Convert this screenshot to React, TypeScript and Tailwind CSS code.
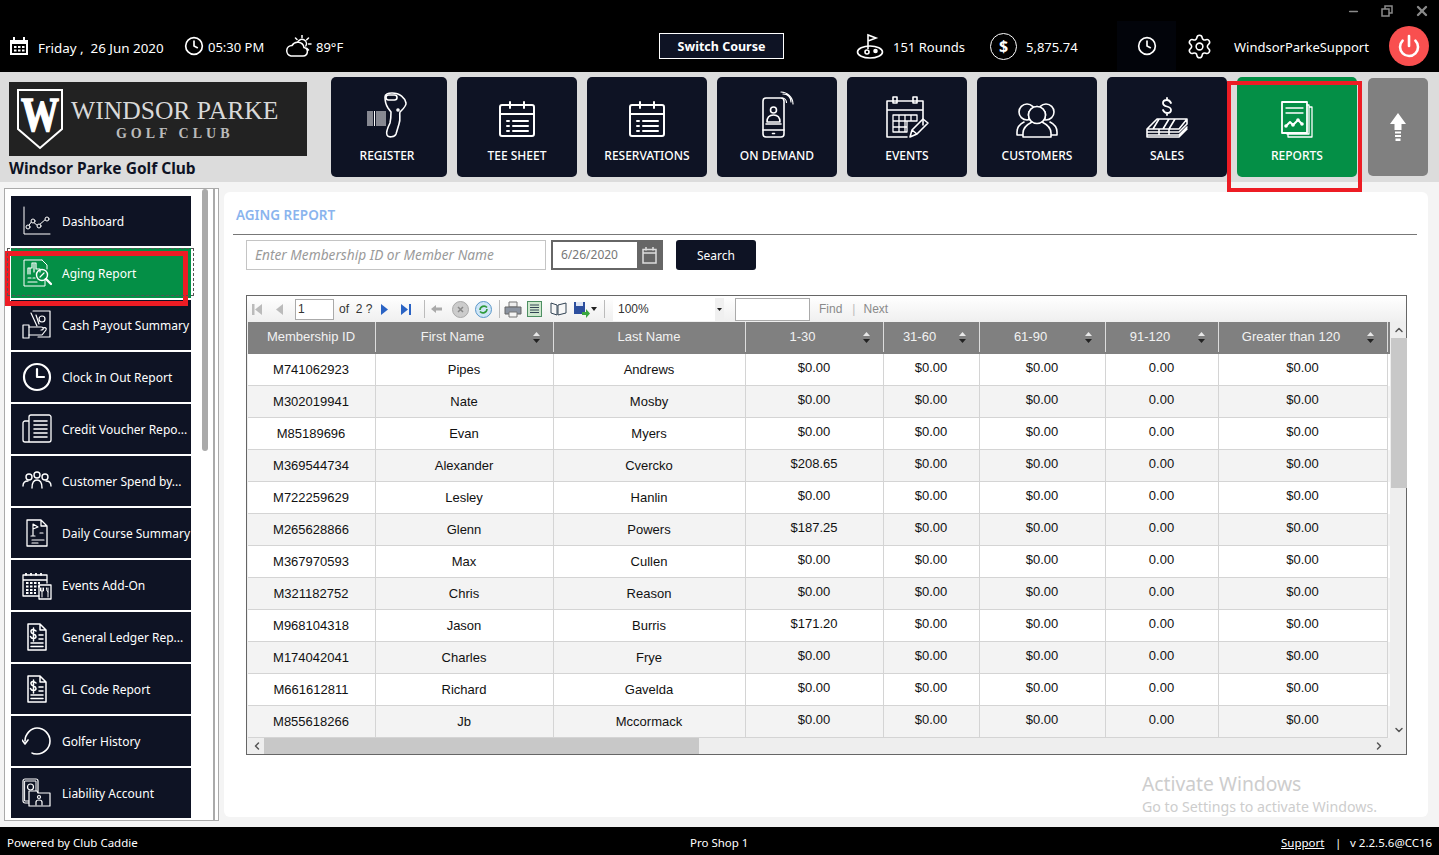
import React from 'react';
import { ChevronDown, ChevronLeft, ChevronRight, ChevronUp, Clock, Minus, Power, Settings, X } from 'lucide-react';

const SANS = 'font-["Noto_Sans",sans-serif]';

type SvgProps = { size?: number; children: React.ReactNode; box?: number };
const Ic = ({ size = 48, box, children }: SvgProps) => (
    <svg width={size} height={size} viewBox={`0 0 ${box ?? size} ${box ?? size}`} fill="none" stroke="currentColor" strokeWidth={1.6} strokeLinecap="round" strokeLinejoin="round" className="shrink-0">
        {children}
    </svg>
);

const SheetIcon = () => (
    <Ic>
        <rect x="7" y="14" width="34" height="31" rx="2" strokeWidth={2} />
        <path d="M7 23h34M17 11v6M31 11v6" strokeWidth={2} />
        <path d="M14 30h2M20 30h15M14 35h2M20 35h15M14 40h2M20 40h15" strokeWidth={2} />
    </Ic>
);

const navItems: { label: string; icon: React.ReactNode; w: string; green?: boolean }[] = [
    {
        label: 'REGISTER',
        w: 'w-[116px]',
        icon: (
            <Ic>
                <path d="M3 20v15M5 20v15M7 20v15M9.500 20v15M12 20v15M14 20v15M16 20v15M18 20v15M20 20v15" strokeWidth={1} strokeLinecap="butt" />
                <path d="M20 6c0-3 3-4 7-4 8 0 13 5 14 10 .5 3-3 6-6 9-1 3 1 7-1 12l-3 10c-1 3-8 4-9 1-1-2 1-8 3-12 1-4 1-8 1-11l-3-4c-2-3-3-7-3-11z" />
                <rect x="21" y="4" width="11" height="5" rx="2.500" />
                <circle cx="33" cy="19" r="1" />
            </Ic>
        ),
    },
    { label: 'TEE SHEET', w: 'w-[120px]', icon: <SheetIcon /> },
    { label: 'RESERVATIONS', w: 'w-[120px]', icon: <SheetIcon /> },
    {
        label: 'ON DEMAND',
        w: 'w-[120px]',
        icon: (
            <Ic>
                <rect x="10" y="7" width="21" height="39" rx="3" />
                <path d="M10 39h21M19.500 42.500h2" />
                <circle cx="20.500" cy="19" r="3" />
                <path d="M14 31c0-5 3-7 6.500-7s6.500 2 6.500 7zM13 33h15" />
                <path d="M29 7c2.500 0 4.500 2 4.500 4.500M30 3c5 0 8 3.500 8 8M28 1c6 0 12 5 12 12" strokeWidth={1.200} />
            </Ic>
        ),
    },
    {
        label: 'EVENTS',
        w: 'w-[120px]',
        icon: (
            <Ic>
                <path d="M24 46H4V10h36v24M4 19h36" />
                <rect x="10" y="6" width="4" height="6" />
                <rect x="30" y="6" width="4" height="6" />
                <path d="M10 24h24v6H10zM10 30h14v11H10zM10 36h14M16 24v17M22 24v17M28 24v6" strokeWidth={1.300} />
                <path d="M27 46l2-7 11-11 5 4-11 11zM29 39l5 4" />
            </Ic>
        ),
    },
    {
        label: 'CUSTOMERS',
        w: 'w-[120px]',
        icon: (
            <Ic>
                <circle cx="14" cy="21" r="8" />
                <circle cx="33" cy="21" r="8" />
                <path d="M4 44v-3c0-5 3-8 7-10M44 44v-3c0-5-3-8-7-10M4 44h7M37 44h7" />
                <circle cx="24" cy="24" r="8.500" fill="#0e1324" />
                <path d="M10 46v-4c0-6 5-9 9-11h10c4 2 9 5 9 11v4z" fill="#0e1324" />
                <circle cx="24" cy="24" r="8.500" fill="#0e1324" />
            </Ic>
        ),
    },
    {
        label: 'SALES',
        w: 'w-[120px]',
        icon: (
            <Ic>
                <path d="M28 12c-1-2-2-3-4-3s-4 1-4 3 2 3 4 3.500 4 1.500 4 3.500-2 3-4 3-3-1-4-3M24 7v2M24 22v2" strokeWidth={1.800} />
                <path d="M14 28h30l-8 10H4zM16 28l-6 10M26 28l-6 10M32 28l-6 10M4 38v3h32l8-8v-5M4 41v3h32l8-8M4 44v2h32l8-8M16 38v6M26 38v6" />
            </Ic>
        ),
    },
    {
        label: 'REPORTS',
        w: 'w-[120px]',
        green: true,
        icon: (
            <Ic>
                <rect x="9" y="11" width="25" height="31" strokeWidth={1.800} />
                <path d="M34 14h2v29H14v-1M36 16h3v30H15v-3M13 17h17M13 22h17" strokeWidth={1.300} />
                <path d="M13 35l4-4 3 3 5-5 4 4" strokeWidth={2} />
                <circle cx="13" cy="35" r="1" fill="white" />
                <circle cx="20" cy="34" r="1" fill="white" />
                <circle cx="25" cy="29" r="1" fill="white" />
                <circle cx="29" cy="33" r="1" fill="white" />
            </Ic>
        ),
    },
];

const SideIcon = ({ children }: { children: React.ReactNode }) => <Ic size={30} box={30}>{children}</Ic>;

const ledger = (
    <SideIcon>
        <path d="M6 2h12l6 6v20H6zM18 2v6h6" strokeWidth={1.500} />
        <path d="M14 9c-1-1-2-1.500-3-1.500S9 8 9 9.500s1 2 2.500 2.500 2.500 1 2.500 2.500-1 2-2.500 2-2.500-.5-3-2M11.500 6v13" strokeWidth={1.500} />
        <path d="M17 13h4M17 17h4M9 21h12M9 24.500h12" strokeWidth={1.500} />
    </SideIcon>
);

const sideItems: { label: string; icon: React.ReactNode }[] = [
    {
        label: 'Dashboard',
        icon: (
            <SideIcon>
                <path d="M2 1v27h26" strokeWidth={1} />
                <path d="M5 22l5-7 6 5 9-8" strokeWidth={1} />
                <circle cx="6" cy="21" r="2" fill="#0e1324" strokeWidth={1} />
                <circle cx="11" cy="15" r="2" fill="#0e1324" strokeWidth={1} />
                <circle cx="17" cy="20" r="2" fill="#0e1324" strokeWidth={1} />
                <circle cx="25" cy="13" r="2" fill="#0e1324" strokeWidth={1} />
            </SideIcon>
        ),
    },
    {
        label: 'Aging Report',
        icon: (
            <SideIcon>
                <path d="M20 2H2v26h21v-7M20 2l5 5v4" strokeWidth={1} />
                <path d="M6 16v-6h4V5h4v6h4v3M8 10v6M12 6v8" strokeWidth={1.200} />
                <circle cx="20" cy="17" r="5.500" strokeWidth={1.400} />
                <path d="M24 21l5 5" strokeWidth={2.400} />
                <path d="M18 19l4-4M6 20h3M6 24h9M11 20h2" strokeWidth={1.200} />
            </SideIcon>
        ),
    },
    {
        label: 'Cash Payout Summary',
        icon: (
            <SideIcon>
                <path d="M11 1h17v26H16" strokeWidth={1.200} />
                <path d="M9 3l6 13M14 5l3 9" strokeWidth={1.200} />
                <circle cx="20" cy="9" r="3" strokeWidth={1.200} />
                <rect x="1" y="15" width="6" height="13" strokeWidth={1.200} />
                <path d="M7 17h12c3 0 3 3 0 3M7 25h13l4-5c1-2-1-3-3-2" strokeWidth={1.200} />
            </SideIcon>
        ),
    },
    {
        label: 'Clock In Out Report',
        icon: (
            <SideIcon>
                <circle cx="15" cy="15" r="13" strokeWidth={2.200} />
                <path d="M15 7v8h7" strokeWidth={2.200} />
            </SideIcon>
        ),
    },
    {
        label: 'Credit Voucher Repo...',
        icon: (
            <SideIcon>
                <path d="M7 7H3c-1 0-2 1-2 2v17c0 1 1 2 2 2h4M7 28h20c1 0 2-1 2-2V3c0-1-1-2-2-2H9C8 1 7 2 7 3z" strokeWidth={1.300} />
                <path d="M12 7h13M12 11h13M12 15h13M12 19h13M12 23h13" strokeWidth={1.600} />
            </SideIcon>
        ),
    },
    {
        label: 'Customer Spend by...',
        icon: (
            <SideIcon>
                <circle cx="7" cy="11" r="3" strokeWidth={1.400} />
                <circle cx="15" cy="9" r="3" strokeWidth={1.400} />
                <circle cx="23" cy="11" r="3" strokeWidth={1.400} />
                <path d="M1 20c0-3 2-5 5-5M10 22c0-5 2-8 5-8s5 3 5 8M29 20c0-3-2-5-5-5" strokeWidth={1.400} />
            </SideIcon>
        ),
    },
    {
        label: 'Daily Course Summary',
        icon: (
            <SideIcon>
                <path d="M5 2h14l6 6v20H5zM19 2v6h6" strokeWidth={1.300} />
                <path d="M11 17V6l5 3-5 2M9 18h4M18 15h3M10 22h12M10 25h6" strokeWidth={1.200} />
            </SideIcon>
        ),
    },
    {
        label: 'Events Add-On',
        icon: (
            <SideIcon>
                <path d="M17 26H1V5h24v8M1 10h24" strokeWidth={1.300} />
                <path d="M4 3v4M9 3v4M14 3v4M19 3v4M4 13h14M4 16.500h14M4 20h10M4 23h10" strokeWidth={1.800} strokeDasharray="2.500 1.500" strokeLinecap="butt" />
                <rect x="17" y="15" width="12" height="14" strokeWidth={1.300} />
                <path d="M20 18v9M26 18v9M18.500 18v3h3v-3M24.500 18c0 3 1 4 1.500 4" strokeWidth={1} />
            </SideIcon>
        ),
    },
    { label: 'General Ledger Rep...', icon: ledger },
    { label: 'GL Code Report', icon: ledger },
    {
        label: 'Golfer History',
        icon: (
            <SideIcon>
                <path d="M3 15C3 8 9 2 15 2c7 0 13 6 13 13s-6 13-13 13c-2 0-4 0-5-1" strokeWidth={1.600} />
                <path d="M0 14l3 4 3-4" strokeWidth={1.600} />
            </SideIcon>
        ),
    },
    {
        label: 'Liability Account',
        icon: (
            <SideIcon>
                <rect x="1" y="1" width="15" height="24" rx="2" strokeWidth={1.200} />
                <rect x="3" y="3" width="11" height="20" strokeWidth={1} />
                <circle cx="8.500" cy="9" r="3" strokeWidth={1.200} />
                <path d="M7 28h21V15H16l-1-2H7z" fill="#0e1324" strokeWidth={1.200} />
                <circle cx="17" cy="19" r="1.500" strokeWidth={1.200} />
                <path d="M14 27v-3c0-1 1-2 3-2s3 1 3 2v3" strokeWidth={1.200} />
            </SideIcon>
        ),
    },
    // only the top edge of the next row shows above the panel's bottom border
    { label: '', icon: null },
];

const rows = [
    ['M741062923', 'Pipes', 'Andrews', '$0.00'],
    ['M302019941', 'Nate', 'Mosby', '$0.00'],
    ['M85189696', 'Evan', 'Myers', '$0.00'],
    ['M369544734', 'Alexander', 'Cvercko', '$208.65'],
    ['M722259629', 'Lesley', 'Hanlin', '$0.00'],
    ['M265628866', 'Glenn', 'Powers', '$187.25'],
    ['M367970593', 'Max', 'Cullen', '$0.00'],
    ['M321182752', 'Chris', 'Reason', '$0.00'],
    ['M968104318', 'Jason', 'Burris', '$171.20'],
    ['M174042041', 'Charles', 'Frye', '$0.00'],
    ['M661612811', 'Richard', 'Gavelda', '$0.00'],
    ['M855618266', 'Jb', 'Mccormack', '$0.00'],
];

const columns: { label: string; w: string; sort: boolean }[] = [
    { label: 'Membership ID', w: 'w-[128px]', sort: false },
    { label: 'First Name', w: 'w-[178px]', sort: true },
    { label: 'Last Name', w: 'w-[192px]', sort: false },
    { label: '1-30', w: 'w-[138px]', sort: true },
    { label: '31-60', w: 'w-[96px]', sort: true },
    { label: '61-90', w: 'w-[126px]', sort: true },
    { label: '91-120', w: 'w-[113px]', sort: true },
    { label: 'Greater than 120', w: 'w-[169px]', sort: true },
];

const SortArrows = () => (
    <svg width="7" height="11" viewBox="0 0 7 11" className="absolute right-[13px] top-[10px]">
        <path d="M3.500 0L7 4H0z" fill="#e8e8e8" />
        <path d="M3.500 11L7 7H0z" fill="#222" />
    </svg>
);

const App = () => {
    return (
        <div className={`relative flex h-[855px] w-[1439px] flex-col overflow-hidden bg-[#f4f4f4] text-white ${SANS}`}>
            {/* top bar */}
            <header className="h-[72px] shrink-0 bg-black">
                <div className="flex h-[22px] items-center justify-end text-[#8a8a8a]">
                    <Minus size={13} strokeWidth={3} className="mr-[21px]" />
                    <svg width="12" height="12" viewBox="0 0 12 12" fill="none" stroke="currentColor" strokeWidth="1.500" className="mr-[21px]">
                        <rect x="1" y="4" width="7" height="7" />
                        <path d="M4 4V1h7v7H8" />
                    </svg>
                    <X size={16} strokeWidth={3.500} className="mr-[9px]" />
                </div>
                <div className="flex h-[50px] items-center pb-[2px] text-[13px]">
                    <div className="ml-[9px] w-[29px] shrink-0">
                        <svg width="20" height="20" viewBox="0 0 20 20">
                            <path d="M1 4h3V1h2v3h8V1h2v3h3v15H1z" fill="white" />
                            <path d="M3 8h14v9H3z" fill="black" />
                            <path d="M5 10h2.500v2H5zM9 10h2.500v2H9zM13 10h2.500v2H13zM5 13.500h2.500v2H5zM9 13.500h2.500v2H9zM13 13.500h2.500v2H13z" fill="white" />
                        </svg>
                    </div>
                    <div className="w-[146px] shrink-0 whitespace-pre pt-[4px] text-[13.4px]">Friday ,  26 Jun 2020</div>
                    <div className="w-[24px] shrink-0">
                        <Clock size={20} strokeWidth={2} />
                    </div>
                    <div className="w-[77px] shrink-0 pt-[4px]">05:30 PM</div>
                    <div className="w-[31px] shrink-0">
                        <svg width="27" height="22" viewBox="0 0 27 22" fill="none" stroke="white" strokeWidth="1.500" strokeLinecap="round">
                            <path d="M6 21h12a4.300 4.300 0 001-8.500A6.500 6.500 0 007 10.500 5.300 5.300 0 006 21z" />
                            <path d="M13 6.500a4.500 4.500 0 017.800 4.500M17 0v2.500M23.500 3l-1.800 1.800M26 9h-2.500M23.500 15l-1.800-1.800M10.500 3l1.500 1.500" />
                        </svg>
                    </div>
                    <div className="w-[343px] shrink-0 pt-[4px]">89°F</div>
                    <button className="h-[26px] w-[125px] shrink-0 border border-white bg-[#0e1324] pt-[3px] text-[12.500px] font-bold">Switch Course</button>
                    <div className="ml-[72px] w-[37px] shrink-0">
                        <svg width="28" height="26" viewBox="0 0 28 26" fill="none" stroke="white" strokeWidth="1.600">
                            <path d="M12 16V2l8 3-8 3" />
                            <ellipse cx="14" cy="19" rx="12.500" ry="6" />
                            <circle cx="11" cy="19" r="2" />
                            <circle cx="19.500" cy="18" r="1.500" fill="white" />
                        </svg>
                    </div>
                    <div className="w-[97px] shrink-0 pt-[4px]">151 Rounds</div>
                    <div className="flex h-[27px] w-[27px] shrink-0 items-center justify-center rounded-full border-[1.500px] border-white text-[16px] font-bold">$</div>
                    <div className="ml-[9px] w-[91px] shrink-0 pt-[4px]">5,875.74</div>
                    <div className="-my-[2px] flex h-[50px] w-[59px] shrink-0 items-center justify-center bg-[#02040a]">
                        <Clock size={20} strokeWidth={2} />
                    </div>
                    <Settings size={27} strokeWidth={1.400} className="ml-[10px] shrink-0" />
                    <div className="ml-[21px] w-[155px] shrink-0 pt-[4px]">WindsorParkeSupport</div>
                    <div className="flex h-[40px] w-[40px] shrink-0 items-center justify-center rounded-full bg-[#f94f4f]">
                        <Power size={24} strokeWidth={2.600} />
                    </div>
                </div>
            </header>

            {/* logo and main nav */}
            <div className="flex h-[110px] shrink-0 bg-[#dcdcdc]">
                <div className="ml-[9px] w-[322px] shrink-0 pt-[10px]">
                    <div className="flex h-[74px] w-[298px] items-center bg-[#222] pl-[7px]">
                        <svg width="48" height="62" viewBox="0 0 48 62" className="shrink-0">
                            <path d="M2 2h44v39L24 60 2 41z" fill="none" stroke="white" strokeWidth="2" />
                            <text x="24" y="43" textAnchor="middle" fontFamily="Liberation Serif" fontWeight="700" fontSize="48" fill="white" stroke="white" strokeWidth="1.500" textLength="38" lengthAdjust="spacingAndGlyphs">W</text>
                        </svg>
                        <div className="ml-[7px] flex flex-col items-center font-['Liberation_Serif',serif] text-[#d9d9d9]">
                            <div className="text-[25.600px] leading-[30px]">WINDSOR PARKE</div>
                            <div className="text-[14px] font-bold leading-[16px] tracking-[4px] text-[#bbb]">GOLF CLUB</div>
                        </div>
                    </div>
                    <div className="mt-[1px] text-[15.500px] font-bold leading-[22px] text-[#0e1324]">Windsor Parke Golf Club</div>
                </div>
                <div className="flex gap-[10px] pt-[5px]">
                    {navItems.map((item) => (
                        <div
                            key={item.label}
                            className={`flex h-[100px] ${item.w} shrink-0 flex-col items-center rounded-[5px] pt-[14px] ${item.green ? 'bg-[#048f46]' : 'bg-[#0e1324]'}`}
                        >
                            <div className="h-[48px]">{item.icon}</div>
                            <div className={`mt-[9px] text-[12px] font-medium leading-[16px] ${item.label === 'REGISTER' ? 'pr-[4px]' : ''}`}>{item.label}</div>
                        </div>
                    ))}
                </div>
                <div className="ml-[11px] mt-[6px] flex h-[98px] w-[60px] shrink-0 items-center justify-center rounded-[5px] bg-[#808080]">
                    <svg width="16" height="28" viewBox="0 0 16 28" fill="white">
                        <path d="M8 0l8 11h-4.500v6h-7v-6H0z" />
                        <path d="M5 18.500h6v2H5zM5 22h6v2H5zM5.500 25.500h5V28h-5z" />
                    </svg>
                </div>
            </div>

            {/* body */}
            <div className="flex min-h-0 flex-1 pb-[10px] pl-[4px] pr-[11px]">
                <aside className="mt-[6px] flex h-[633px] w-[215px] shrink-0 overflow-hidden border border-[#aaa] bg-white">
                    <div className="flex w-[197px] shrink-0 flex-col gap-[2px] pl-[6px] pt-[7px]">
                        {sideItems.map((item) => {
                            const active = item.label === 'Aging Report';
                            return (
                                <div
                                    key={item.label}
                                    className={`flex h-[50px] w-[180px] shrink-0 items-center gap-[10px] pl-[11px] text-[12px] ${active ? 'bg-[#048f46]' : 'bg-[#0e1324]'}`}
                                >
                                    <div className="w-[30px] shrink-0">{item.icon}</div>
                                    <span className="whitespace-nowrap pt-[2px]">{item.label}</span>
                                </div>
                            );
                        })}
                    </div>
                    <div className="h-[262px] w-[6px] shrink-0 rounded-full bg-[#aaa]" />
                    <div className="ml-[5px] h-full w-[2px] shrink-0 bg-[#aaa]" />
                </aside>

                <main className="ml-[5px] mt-[10px] flex h-[625px] w-[1204px] shrink-0 flex-col rounded-[6px] bg-white pl-[9px] pr-[11px] text-black">
                    <h1 className="mt-[14px] pl-[3px] text-[13.500px] font-semibold leading-[18px] text-[#8ab4ee]">AGING REPORT</h1>
                    <div className="mt-[10px] h-px bg-[#777]" />
                    <div className="ml-[13px] mt-[5px] flex h-[30px] items-center">
                        <div className="flex h-[30px] w-[300px] items-center border border-[#c4c4c4] pl-[8px] pt-[1px] text-[13.700px] italic text-[#9a9a9a]">
                            Enter Membership ID or Member Name
                        </div>
                        <div className="ml-[5px] flex h-[30px] w-[112px] items-center border-2 border-[#666] text-[12px] text-[#777]">
                            <span className="flex-1 pl-[8px]">6/26/2020</span>
                            <div className="flex h-full w-[24px] items-center justify-center bg-[#666] text-[#ddd]">
                                <svg width="15" height="18" viewBox="0 0 15 18" fill="none" stroke="currentColor" strokeWidth="1.500">
                                    <rect x="1" y="3.500" width="13" height="13.500" />
                                    <path d="M1 7h13M4 1v3.500M11 1v3.500" />
                                </svg>
                            </div>
                        </div>
                        <button className="ml-[13px] h-[30px] w-[80px] rounded-[3px] bg-[#0e1324] pt-[2px] text-[12px] text-white">Search</button>
                    </div>

                    {/* report viewer */}
                    <div className="ml-[13px] mt-[25px] flex h-[460px] w-[1161px] flex-col border border-[#666] font-['Liberation_Sans',sans-serif]">
                        <div className="flex h-[26px] shrink-0 items-center bg-gradient-to-b from-white to-[#efefef] pl-[4px] text-[12px] text-[#333]">
                            <svg width="12" height="13" viewBox="0 0 12 13" fill="#bbb" className="shrink-0">
                                <path d="M1 1h2.500v11H1zM11 1v11L4 6.500z" />
                            </svg>
                            <svg width="10" height="13" viewBox="0 0 10 13" fill="#bbb" className="ml-[11px] shrink-0">
                                <path d="M9 1v11L2 6.500z" />
                            </svg>
                            <div className="ml-[11px] flex h-[21px] w-[39px] shrink-0 items-center border border-[#aaa] bg-white pl-[2px]">1</div>
                            <span className="ml-[5px] w-[41px] shrink-0 whitespace-pre">of  2 ?</span>
                            <svg width="10" height="13" viewBox="0 0 10 13" fill="#2a63c4" className="shrink-0">
                                <path d="M1 1v11L8 6.500z" />
                            </svg>
                            <svg width="12" height="13" viewBox="0 0 12 13" fill="#2a63c4" className="ml-[10px] shrink-0">
                                <path d="M1 1v11l7-5.500zM9 1h2v11H9z" />
                            </svg>
                            <div className="ml-[12px] h-[18px] w-px bg-[#bbb]" />
                            <svg width="12" height="10" viewBox="0 0 12 10" fill="#aaa" className="ml-[6px] shrink-0">
                                <path d="M0 5l5-4v2.500h6v3H5V9z" />
                            </svg>
                            <svg width="17" height="17" viewBox="0 0 17 17" className="ml-[9px] shrink-0">
                                <circle cx="8.500" cy="8.500" r="8" fill="#ccc" stroke="#aaa" />
                                <path d="M6 6l5 5M11 6l-5 5" stroke="#888" strokeWidth="1.500" />
                            </svg>
                            <svg width="17" height="17" viewBox="0 0 17 17" fill="none" className="ml-[6px] shrink-0">
                                <circle cx="8.500" cy="8.500" r="8" fill="#cfe6f7" stroke="#5a97c9" />
                                <path d="M5 9a4 4 0 017-2.500M12 8a4 4 0 01-7 2.500" stroke="#2f9a3c" strokeWidth="1.600" />
                            </svg>
                            <div className="ml-[7px] h-[18px] w-px bg-[#bbb]" />
                            <svg width="18" height="17" viewBox="0 0 18 17" className="ml-[4px] shrink-0">
                                <path d="M5 1h8v5H5z" fill="#eee" stroke="#777" />
                                <path d="M1 6h16v7H1z" fill="#8b93a0" stroke="#666" />
                                <path d="M5 11h8v5H5z" fill="#f4f4f4" stroke="#777" />
                            </svg>
                            <svg width="15" height="16" viewBox="0 0 15 16" className="ml-[5px] shrink-0">
                                <rect x="0.500" y="0.500" width="14" height="15" fill="#cfe8cf" stroke="#4d8f62" />
                                <path d="M3 4h9M3 6.500h9M3 9h9M3 11.500h9" stroke="#345" />
                            </svg>
                            <svg width="17" height="14" viewBox="0 0 17 14" className="ml-[8px] shrink-0">
                                <path d="M1 1l6 2v10l-6-2zM8 3l8-2v10l-8 2z" fill="#f7f7f7" stroke="#345" />
                            </svg>
                            <svg width="17" height="17" viewBox="0 0 17 17" className="ml-[6px] shrink-0">
                                <path d="M1 1h11v12H1z" fill="#2d4f9e" />
                                <path d="M3 1h7v4H3z" fill="#dfe6f5" />
                                <path d="M9 11h4V8l4 4.500L13 17v-3H9z" fill="#3aa63f" />
                            </svg>
                            <svg width="6" height="4" viewBox="0 0 6 4" fill="#222" className="ml-[1px] shrink-0">
                                <path d="M0 0h6L3 4z" />
                            </svg>
                            <div className="ml-[7px] h-[18px] w-px bg-[#bbb]" />
                            <div className="ml-[8px] flex h-[23px] w-[111px] shrink-0 items-center justify-between bg-white pl-[5px]">
                                <span>100%</span>
                                <div className="flex h-full w-[9px] items-center justify-center bg-[#f0f0f0]">
                                    <svg width="5" height="3" viewBox="0 0 5 3" fill="#222">
                                        <path d="M0 0h5L2.500 3z" />
                                    </svg>
                                </div>
                            </div>
                            <div className="ml-[11px] h-[23px] w-[75px] shrink-0 border border-[#aaa] bg-white" />
                            <span className="ml-[9px] text-[#8a8a8a]">Find</span>
                            <span className="ml-[10px] text-[#bbb]">|</span>
                            <span className="ml-[8px] text-[#8a8a8a]">Next</span>
                        </div>

                        <div className="flex min-h-0 flex-1 bg-[#eee]">
                            <div className="ml-px flex w-[1142px] shrink-0 flex-col overflow-hidden bg-white">
                                <div className="flex h-[32px] shrink-0 bg-[#808080] pb-[2px] text-[13px] text-[#f2f2f2]">
                                    {columns.map((c) => (
                                        <div
                                            key={c.label}
                                            className={`relative flex ${c.w} shrink-0 items-center justify-center border-r border-[#ddd] pr-[1px] ${c.sort ? 'pr-[24px]' : ''}`}
                                        >
                                            {c.label}
                                            {c.sort && <SortArrows />}
                                        </div>
                                    ))}
                                </div>
                                {rows.map((r, i) => {
                                    const cells = [...r, '$0.00', '$0.00', '0.00', '$0.00'];
                                    return (
                                        <div key={r[0]} className={`flex h-[32px] shrink-0 text-[13px] text-[#111] ${i % 2 ? 'bg-[#f3f3f3]' : 'bg-white'}`}>
                                            {columns.map((c, j) => (
                                                <div
                                                    key={c.label}
                                                    className={`flex ${c.w} shrink-0 items-center justify-center border-r border-b border-[#d4d4d4] pr-[1px] ${j > 2 ? 'pb-[3px]' : ''}`}
                                                >
                                                    {cells[j]}
                                                </div>
                                            ))}
                                        </div>
                                    );
                                })}
                            </div>
                            <div className="ml-[1px] flex w-[16px] shrink-0 flex-col items-center">
                                <ChevronUp size={12} strokeWidth={3} className="my-[2px] shrink-0 text-[#555]" />
                                <div className="h-[150px] w-full bg-[#c8c8c8]" />
                                <div className="flex-1" />
                                <ChevronDown size={12} strokeWidth={3} className="my-[2px] shrink-0 text-[#555]" />
                            </div>
                        </div>
                        <div className="flex h-[16px] shrink-0 items-center bg-[#eee]">
                            <ChevronLeft size={12} strokeWidth={3} className="ml-[3px] w-[14px] shrink-0 text-[#555]" />
                            <div className="h-full w-[435px] bg-[#c8c8c8]" />
                            <div className="flex-1" />
                            <ChevronRight size={12} strokeWidth={3} className="mr-[21px] shrink-0 text-[#555]" />
                        </div>
                    </div>
                </main>
            </div>

            {/* footer */}
            <footer className="relative flex h-[28px] shrink-0 items-center bg-black pl-[7px] pt-[4px] text-[11.500px]">
                <span>Powered by Club Caddie</span>
                <span className="absolute left-[690px]">Pro Shop 1</span>
                <span className="absolute left-[1281px] underline">Support</span>
                <span className="absolute left-[1335px]">|</span>
                <span className="absolute left-[1350px]">v 2.2.5.6@CC16</span>
            </footer>

            {/* annotation boxes and the windows watermark lie over the page */}
            <div className="absolute left-[1227px] top-[81px] h-[111px] w-[135px] border-[4px] border-[#ed1c24]" />
            <div className="absolute left-[5px] top-[251px] h-[55px] w-[183px] border-[5px] border-[#ed1c24]" />
            <div className="absolute left-[7px] top-[248px] h-[48px] w-[187px] border border-dashed border-[#555]" />
            <div className="absolute left-[1142px] top-[771px] text-[#cdcdcd]">
                <div className="text-[19.300px] leading-[26px]">Activate Windows</div>
                <div className="text-[14.200px] leading-[20px]">Go to Settings to activate Windows.</div>
            </div>
        </div>
    );
};

export default App;
